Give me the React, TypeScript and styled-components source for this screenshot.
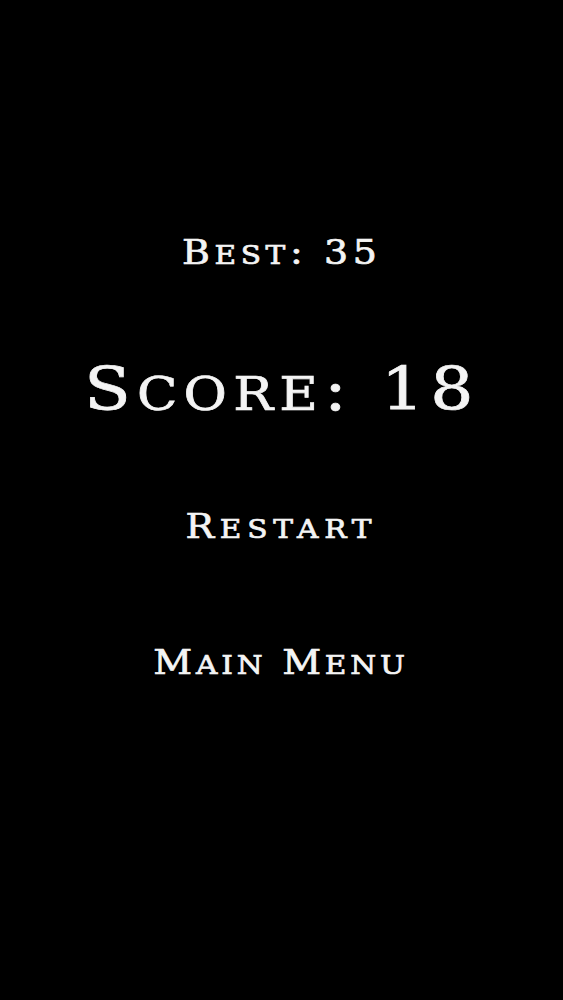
import React from 'react';
import styled, { createGlobalStyle } from 'styled-components';

const GlobalStyle = createGlobalStyle`
  html, body {
    margin: 0;
    padding: 0;
    background: #000;
  }
`;

const Screen = styled.div`
  width: 100%;
  min-height: 1000px;
  background: #000;
  display: flex;
  flex-direction: column;
  align-items: center;
  padding-top: 236px;
  box-sizing: border-box;
  font-family: "DejaVu Serif", "Liberation Serif", serif;
  color: #f4f4f4;
  -webkit-text-stroke: 0.7px #f4f4f4;
`;

// wide engraved-style lettering
const Label = styled.div<{ size: number; spacing: number; gap: number }>`
  font-size: ${({ size }) => size}px;
  letter-spacing: ${({ spacing }) => spacing}px;
  line-height: 1;
  margin-top: ${({ gap }) => gap}px;
  white-space: nowrap;
  transform: scaleX(1.15);
`;

const MenuButton = styled.button<{ spacing: number; gap: number }>`
  background: none;
  border: none;
  padding: 0;
  margin-top: ${({ gap }) => gap}px;
  font: inherit;
  font-size: 33px;
  letter-spacing: ${({ spacing }) => spacing}px;
  line-height: 1;
  color: inherit;
  cursor: pointer;
  white-space: nowrap;
  transform: scaleX(1.15);
`;

// lowercase letters drawn as smaller capitals
const Small = styled.span`
  font-size: 0.78em;
  text-transform: uppercase;
`;

function Caps({ text }: { text: string }) {
  const parts: React.ReactNode[] = [];
  let run = '';
  const flush = () => {
    if (run) parts.push(<Small key={parts.length}>{run}</Small>);
    run = '';
  };
  for (const ch of text) {
    if (/[a-z]/.test(ch)) {
      run += ch;
    } else {
      flush();
      parts.push(ch);
    }
  }
  flush();
  return <>{parts}</>;
}

export default function App() {
  return (
    <>
      <GlobalStyle />
      <Screen>
        <Label size={33} spacing={4} gap={0}><Caps text="Best: 35" /></Label>
        <Label size={59} spacing={5.4} gap={91}><Caps text="Score: 18" /></Label>
        <MenuButton spacing={5} gap={91}><Caps text="Restart" /></MenuButton>
        <MenuButton spacing={3.3} gap={103}><Caps text="Main Menu" /></MenuButton>
      </Screen>
    </>
  );
}
